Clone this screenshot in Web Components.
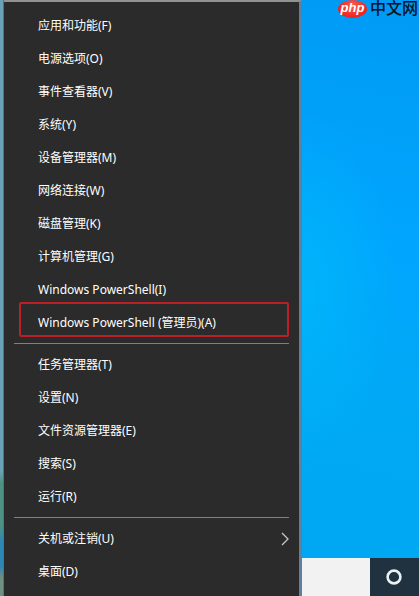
<!DOCTYPE html>
<html lang="zh-CN">
<head>
<meta charset="UTF-8">
<meta name="viewport" content="width=device-width, initial-scale=1.0">
<title>Windows PowerShell</title>
<style>
    body {
        margin: 0;
        font-family: "Noto Sans", "Noto Sans CJK SC", sans-serif;
        font-size: 12px;
        line-height: 16px;
    }
</style>
</head>
<body>
<desktop-screen>
    <power-menu slot="menu">
        <menu-item>应用和功能(F)</menu-item>
        <menu-item>电源选项(O)</menu-item>
        <menu-item>事件查看器(V)</menu-item>
        <menu-item>系统(Y)</menu-item>
        <menu-item>设备管理器(M)</menu-item>
        <menu-item>网络连接(W)</menu-item>
        <menu-item>磁盘管理(K)</menu-item>
        <menu-item>计算机管理(G)</menu-item>
        <menu-item>Windows PowerShell(I)</menu-item>
        <menu-item marked>Windows PowerShell (管理员)(A)</menu-item>
        <menu-divider></menu-divider>
        <menu-item>任务管理器(T)</menu-item>
        <menu-item>设置(N)</menu-item>
        <menu-item>文件资源管理器(E)</menu-item>
        <menu-item>搜索(S)</menu-item>
        <menu-item>运行(R)</menu-item>
        <menu-divider></menu-divider>
        <menu-item submenu>关机或注销(U)</menu-item>
        <menu-item>桌面(D)</menu-item>
    </power-menu>
    <site-logo slot="logo"></site-logo>
    <task-bar slot="taskbar"></task-bar>
</desktop-screen>

<script>
class DesktopScreen extends HTMLElement {
    constructor() {
        super();
        this.attachShadow({ mode: 'open' });
        this.shadowRoot.innerHTML = `
            <style>
                :host {
                    display: grid;
                    grid-template-columns: 4px minmax(0, 298px) minmax(0, 1fr);
                    min-height: 100vh;
                }
                .edge {
                    background: linear-gradient(#6aa3b8 0 79%, #4f9283 81% 88%, #2e86b4 91% 95%, #6f8f80 97%);
                    border-right: 1px solid #4c7688;
                }
                .side {
                    display: flex;
                    flex-direction: column;
                    background:
                        radial-gradient(ellipse 80% 30% at 0 49%, #00b4fa, transparent),
                        linear-gradient(192deg, #009af4, #00a6fe 42%, #00a9f4 68%, #00a6f2);
                }
                .wallpaper {
                    flex: 1;
                    display: flex;
                    justify-content: flex-end;
                    align-items: flex-start;
                }
            </style>
            <div class="edge"></div>
            <slot name="menu"></slot>
            <div class="side">
                <div class="wallpaper"><slot name="logo"></slot></div>
                <slot name="taskbar"></slot>
            </div>
        `;
    }
}

class PowerMenu extends HTMLElement {
    constructor() {
        super();
        this.attachShadow({ mode: 'open' });
        this.shadowRoot.innerHTML = `
            <style>
                :host {
                    display: block;
                    box-sizing: border-box;
                    padding: 7px 10px 8px;
                    background: #2b2b2b;
                    border-top: 2px solid #8f9491;
                    border-right: 3px solid #5f7f9e;
                    color: #fff;
                }
                nav {
                    display: flex;
                    flex-direction: column;
                }
            </style>
            <nav><slot></slot></nav>
        `;
    }
}

class MenuItem extends HTMLElement {
    constructor() {
        super();
        this.attachShadow({ mode: 'open' });
    }

    connectedCallback() {
        const arrow = this.hasAttribute('submenu')
            ? '<svg width="8" height="14" viewBox="0 0 8 14" aria-hidden="true"><path d="M1 1l6 6-6 6" fill="none" stroke="#c8c8c8" stroke-width="1.3"/></svg>'
            : '';
        this.shadowRoot.innerHTML = `
            <style>
                :host {
                    display: block;
                    position: relative;
                }
                button {
                    display: flex;
                    align-items: center;
                    justify-content: space-between;
                    width: 100%;
                    height: 33px;
                    padding: 0 0 0 24px;
                    border: 0;
                    background: none;
                    color: inherit;
                    font: inherit;
                    white-space: nowrap;
                }
                /* the frame sits over the row and its neighbour */
                :host([marked])::after {
                    content: "";
                    position: absolute;
                    inset: -4px 0 2px 5px;
                    border: 2px solid #bd1f26;
                    border-radius: 2px;
                    pointer-events: none;
                }
            </style>
            <button type="button"><span><slot></slot></span>${arrow}</button>
        `;
    }
}

class MenuDivider extends HTMLElement {
    constructor() {
        super();
        this.attachShadow({ mode: 'open' });
        this.shadowRoot.innerHTML = `
            <style>
                :host {
                    display: block;
                    height: 1px;
                    margin: 4px 0;
                    background: #808080;
                }
            </style>
        `;
    }
}

class SiteLogo extends HTMLElement {
    constructor() {
        super();
        this.attachShadow({ mode: 'open' });
        this.shadowRoot.innerHTML = `
            <style>
                :host {
                    display: block;
                }
                a {
                    display: flex;
                    align-items: center;
                    gap: 3px;
                    padding-right: 1px;
                    color: #06121f;
                    font-family: "Liberation Sans", "Noto Sans CJK SC", sans-serif;
                    font-size: 16px;
                    font-weight: 500;
                    line-height: 18px;
                    text-decoration: none;
                    white-space: nowrap;
                }
                .badge {
                    width: 29px;
                    height: 18px;
                    border-radius: 50%;
                    background: radial-gradient(ellipse at 50% 30%, #ff5a4d, #ee2222 70%);
                    color: #fff;
                    font-size: 13px;
                    font-style: italic;
                    font-weight: bold;
                    line-height: 15px;
                    text-align: center;
                }
            </style>
            <a href="#"><span class="badge">php</span><span>中文网</span></a>
        `;
    }
}

class TaskBar extends HTMLElement {
    constructor() {
        super();
        this.attachShadow({ mode: 'open' });
        this.shadowRoot.innerHTML = `
            <style>
                :host {
                    display: flex;
                    height: 38px;
                    background: #20323f;
                }
                input {
                    flex: 1;
                    min-width: 0;
                    padding: 0 8px;
                    border: 0;
                    background: #f2f2f2;
                    font: inherit;
                }
                button {
                    display: flex;
                    align-items: center;
                    justify-content: center;
                    width: 49px;
                    padding: 0 2px 0 0;
                    border: 0;
                    background: none;
                }
            </style>
            <input type="search" aria-label="搜索">
            <button type="button" aria-label="Cortana">
                <svg width="16" height="16" viewBox="0 0 16 16"><circle cx="8" cy="8" r="6.4" fill="none" stroke="#e9f1f5" stroke-width="2.6"/></svg>
            </button>
        `;
    }
}

customElements.define('desktop-screen', DesktopScreen);
customElements.define('power-menu', PowerMenu);
customElements.define('menu-item', MenuItem);
customElements.define('menu-divider', MenuDivider);
customElements.define('site-logo', SiteLogo);
customElements.define('task-bar', TaskBar);
</script>
</body>
</html>
